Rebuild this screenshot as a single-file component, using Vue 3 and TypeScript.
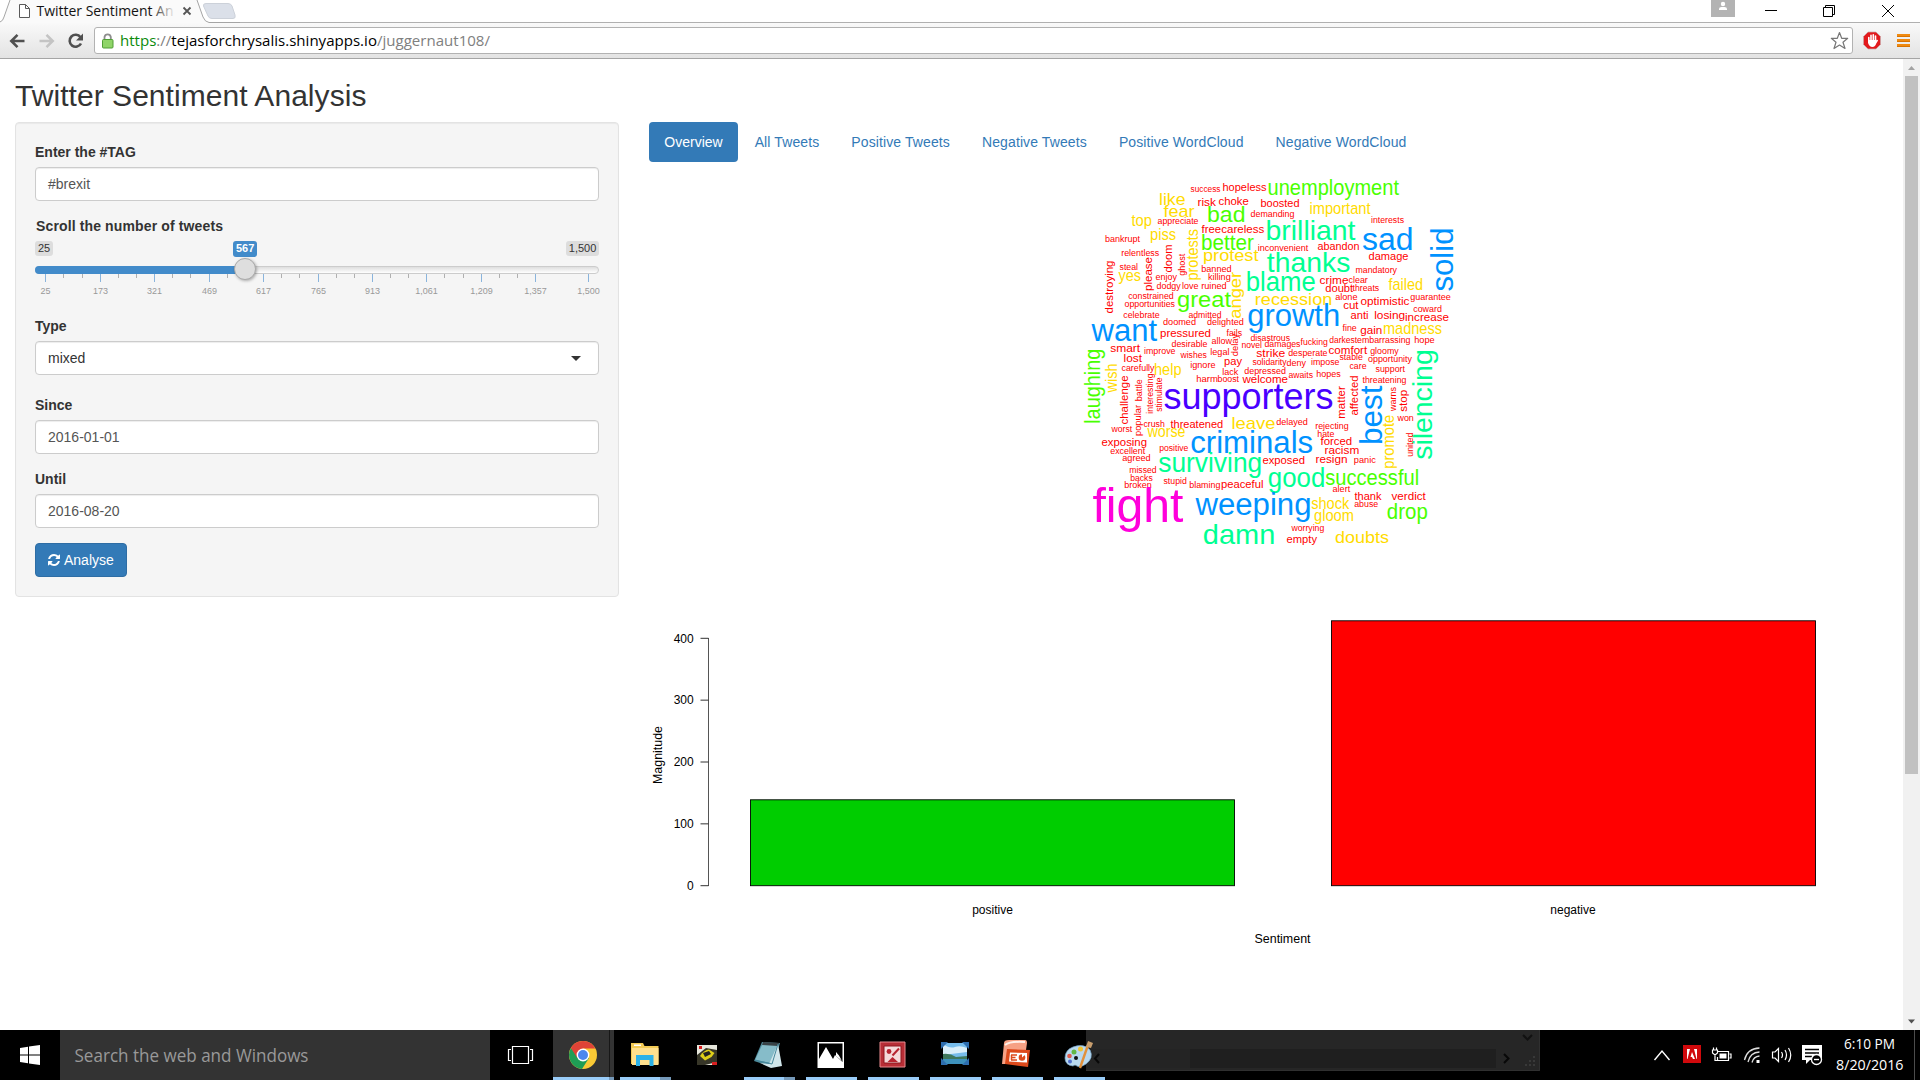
<script setup lang="ts">
type Tier = 'xs' | 'sm' | 'md' | 'lg' | 'xl' | 'xxl' | 'huge' | 'max'
// text, start x, baseline y, run length, tier, vertical
type Word = [string, number, number, number, Tier, boolean?]

const tiers: Record<Tier, { size: number; color: string }> = {
  xs: { size: 8.4, color: '#ff0000' },
  sm: { size: 11, color: '#ff0000' },
  md: { size: 16.6, color: '#ffdb00' },
  lg: { size: 22, color: '#49ff00' },
  xl: { size: 28, color: '#00ff92' },
  xxl: { size: 31, color: '#0092ff' },
  huge: { size: 36, color: '#4900ff' },
  max: { size: 48, color: '#ff00db' },
}

const words: Word[] = [
  ['success', 1190, 191.7, 30, 'xs'], ['hopeless', 1222, 190.7, 44, 'sm'], ['like', 1158.5, 204.7, 26.5, 'md'],
  ['risk', 1197, 205, 18.5, 'sm'], ['choke', 1218, 204, 30.3, 'sm'], ['boosted', 1260, 206.7, 39, 'sm'],
  ['fear', 1163, 216.7, 31, 'md'], ['top', 1131, 225, 20.5, 'md'], ['appreciate', 1157, 223.7, 41, 'xs'],
  ['bad', 1206.5, 221.7, 38.5, 'lg'], ['demanding', 1250, 216.7, 44, 'xs'], ['free', 1201, 232.3, 19.5, 'sm'],
  ['careless', 1220.7, 232.7, 43, 'sm'], ['bankrupt', 1104.5, 241.5, 35, 'xs'], ['piss', 1149.5, 239.7, 26, 'md'],
  ['better', 1200.5, 249, 53, 'lg'], ['inconvenient', 1257.3, 250.7, 50.5, 'xs'], ['relentless', 1120.7, 255.5, 38, 'xs'],
  ['protest', 1202.5, 260.7, 55.5, 'md'], ['protests', 1197, 280, 51.5, 'md', true], ['doom', 1171.7, 272, 28, 'sm', true],
  ['ghost', 1184, 275.3, 22, 'xs', true], ['please', 1151.7, 290.5, 34, 'sm', true], ['destroying', 1112, 313, 53, 'sm', true],
  ['steal', 1119, 269, 18.5, 'xs'], ['yes', 1118, 280.7, 22.5, 'md'], ['enjoy', 1155, 279.7, 21.5, 'xs'],
  ['banned', 1200.7, 271.7, 30.5, 'xs'], ['killing', 1207.5, 279, 22.7, 'xs'], ['dodgy', 1156, 288.7, 24.3, 'xs'],
  ['love', 1181.5, 288.3, 16.5, 'xs'], ['ruined', 1200.7, 288, 25.5, 'xs'], ['constrained', 1127.7, 298, 45.5, 'xs'],
  ['opportunities', 1124, 306.7, 50.5, 'xs'], ['great', 1176.5, 306, 54, 'lg'], ['anger', 1240.7, 318.3, 47, 'md', true],
  ['celebrate', 1122.7, 317.7, 36.5, 'xs'], ['admitted', 1188, 317.7, 33, 'xs'], ['doomed', 1162.5, 324.7, 33, 'xs'],
  ['delighted', 1206.5, 324.7, 36.7, 'xs'], ['want', 1091, 340.7, 65.5, 'xxl'], ['pressured', 1159.5, 336, 51, 'sm'],
  ['fails', 1226, 335, 15.5, 'xs'], ['desirable', 1171, 346, 36, 'xs'], ['allow', 1211, 343.7, 20.5, 'xs'],
  ['delay', 1237.7, 355.7, 22.5, 'xs', true], ['novel', 1241, 347.3, 20.5, 'xs'], ['damages', 1264, 346.7, 36, 'xs'],
  ['disastrous', 1250, 340, 39.5, 'xs'], ['smart', 1109.7, 351, 30, 'sm'], ['improve', 1143.5, 353.7, 31.5, 'xs'],
  ['legal', 1209.7, 354.7, 19.3, 'xs'], ['wishes', 1180, 357.3, 26.3, 'xs'], ['strike', 1255.7, 356.3, 29, 'sm'],
  ['lost', 1123, 361.7, 18.5, 'sm'], ['laughing', 1099.5, 423.3, 75, 'lg', true],
  ['unemployment', 1267, 194.3, 131.5, 'lg'], ['important', 1309, 213, 61, 'md'], ['interests', 1370.5, 222.7, 33, 'xs'],
  ['brilliant', 1265, 239.7, 90, 'xl'], ['sad', 1361.5, 249.7, 51.5, 'xxl'], ['solid', 1452.5, 291, 64, 'xxl', true],
  ['abandon', 1317, 249, 42, 'sm'], ['damage', 1368, 259, 40, 'sm'], ['thanks', 1266.3, 271.3, 83.5, 'xl'],
  ['mandatory', 1355, 272.7, 41.5, 'xs'], ['blame', 1245.2, 290.7, 70, 'xl'], ['crime', 1319, 283, 29, 'sm'],
  ['clear', 1348, 282, 19.3, 'xs'], ['failed', 1388, 289, 34.5, 'md'], ['doubt', 1324.7, 291.7, 28, 'sm'],
  ['threats', 1352, 290.3, 26.7, 'xs'], ['recession', 1254.3, 304, 77.5, 'md'], ['alone', 1334.7, 299.3, 22.3, 'xs'],
  ['optimistic', 1360, 304, 49, 'sm'], ['guarantee', 1409.7, 299.3, 40.5, 'xs'], ['cut', 1342.7, 308.7, 15.3, 'sm'],
  ['growth', 1246.7, 325.3, 93, 'xxl'], ['anti', 1350, 318.7, 18, 'sm'], ['losing', 1373.7, 318, 31, 'sm'],
  ['coward', 1412.7, 311.3, 28.7, 'xs'], ['increase', 1404.5, 320.7, 44, 'sm'], ['fine', 1342, 330.7, 14.3, 'xs'],
  ['gain', 1359.7, 333, 22, 'sm'], ['madness', 1382.5, 333.3, 59, 'md'], ['fucking', 1300, 344.7, 27.3, 'xs'],
  ['darkest', 1328.7, 342, 28, 'xs'], ['embarrassing', 1356.5, 342, 53.5, 'xs'], ['hope', 1413.7, 342, 20.5, 'xs'],
  ['comfort', 1328, 353.3, 38.7, 'sm'], ['gloomy', 1369.7, 353, 28.5, 'xs'], ['desperate', 1287.7, 355.3, 39.3, 'xs'],
  ['stable', 1339, 359.7, 23.3, 'xs'], ['opportunity', 1367.5, 361.3, 44, 'xs'], ['pay', 1223.5, 364.3, 18, 'sm'],
  ['ignore', 1189.7, 367.3, 25.3, 'xs'], ['solidarity', 1252, 364.7, 34, 'xs'], ['deny', 1286, 365.3, 19.5, 'xs'],
  ['impose', 1310.5, 364.7, 28.5, 'xs'], ['care', 1349, 368.7, 17, 'xs'], ['support', 1375, 371.7, 29.5, 'xs'],
  ['carefully', 1121, 370, 33, 'xs'], ['wish', 1116.7, 392, 29, 'md', true], ['help', 1153.5, 374, 27.5, 'md'],
  ['lack', 1221.7, 374.3, 16, 'xs'], ['depressed', 1243.7, 373, 41.7, 'xs'], ['harm', 1195.7, 381.7, 21.7, 'xs'],
  ['boost', 1217, 381.7, 21.5, 'xs'], ['welcome', 1242, 382.7, 45.5, 'sm'], ['awaits', 1288, 377.3, 24.5, 'xs'],
  ['hopes', 1315.7, 376.7, 24.5, 'xs'], ['threatening', 1362, 382.7, 44, 'xs'], ['challenge', 1127.7, 424, 49, 'sm', true],
  ['popular', 1140, 435.5, 31, 'xs', true], ['battle', 1141.7, 400.7, 22, 'xs', true], ['interesting', 1152, 413.3, 40.3, 'xs', true],
  ['stimulate', 1161, 411.3, 34.3, 'xs', true], ['supporters', 1163, 408.3, 170, 'huge'], ['matter', 1344, 418.2, 32.5, 'sm', true],
  ['affected', 1357, 415, 40, 'sm', true], ['best', 1381.3, 444.5, 59.5, 'xxl', true], ['warns', 1395.7, 410.5, 24, 'xs', true],
  ['stop', 1406.7, 411.3, 22, 'sm', true], ['silencing', 1431.3, 459.3, 110.5, 'xl', true],
  ['crush', 1143, 426.3, 21.3, 'xs'], ['threatened', 1170, 427, 52.7, 'sm'], ['leave', 1231, 428, 44, 'md'],
  ['worst', 1111, 431.7, 20.7, 'xs'], ['worse', 1147, 436.7, 38, 'md'], ['delayed', 1275.7, 424.7, 31.7, 'xs'],
  ['rejecting', 1314.7, 428, 33.5, 'xs'], ['won', 1397, 420.7, 16.3, 'xs'], ['hate', 1316.7, 436.7, 17.3, 'xs'],
  ['promote', 1393, 468.3, 54, 'md', true], ['united', 1412, 456.3, 24.3, 'xs', true], ['exposing', 1101, 445, 45.5, 'sm'],
  ['criminals', 1189.7, 452.7, 123, 'xxl'], ['forced', 1320, 444.7, 31.7, 'sm'], ['racism', 1324, 453.7, 34.7, 'sm'],
  ['excellent', 1109.7, 453.7, 35, 'xs'], ['positive', 1158.7, 450.7, 29.2, 'xs'], ['agreed', 1121.7, 460.7, 28.5, 'xs'],
  ['surviving', 1157.7, 471, 104, 'xl'], ['exposed', 1262, 463.7, 42.5, 'sm'], ['resign', 1315, 462.7, 32, 'sm'],
  ['panic', 1353.3, 462.7, 22, 'xs'], ['missed', 1128.7, 472.7, 27.5, 'xs'], ['backs', 1129.7, 480.3, 22.5, 'xs'],
  ['broken', 1123.7, 487.7, 27.5, 'xs'], ['stupid', 1163, 483.7, 23.3, 'xs'], ['blaming', 1188.7, 487.7, 31.2, 'xs'],
  ['peaceful', 1220.5, 487, 42.5, 'sm'], ['good', 1267.3, 486.7, 57.5, 'xl'], ['successful', 1324.7, 484, 94, 'lg'],
  ['alert', 1332, 491.7, 17.7, 'xs'], ['fight', 1092, 521.7, 91, 'max'], ['weeping', 1195, 514.7, 116, 'xxl'],
  ['shock', 1310.7, 508, 38, 'md'], ['gloom', 1313.5, 520, 40, 'md'], ['thank', 1354, 499, 27, 'sm'],
  ['abuse', 1353.7, 506.7, 24, 'xs'], ['verdict', 1391, 499.7, 34.3, 'sm'], ['drop', 1386.3, 518.7, 41, 'lg'],
  ['worrying', 1291, 530, 32.7, 'xs'], ['empty', 1286, 542, 30.5, 'sm'], ['doubts', 1334.5, 542, 54, 'md'],
  ['damn', 1202.3, 543.7, 72.5, 'xl'],
]

const tabs = ['Overview', 'All Tweets', 'Positive Tweets', 'Negative Tweets', 'Positive WordCloud', 'Negative WordCloud']
const gridLabels = ['25', '173', '321', '469', '617', '765', '913', '1,061', '1,209', '1,357', '1,500']
const gridX = [10.5, 65.5, 119.5, 174.5, 228.5, 283.5, 337.5, 391.5, 446.5, 500.5, 553.5]
const minorX: number[] = []
for (let i = 0; i < 9; i++) {
  minorX.push(Math.floor(10 + i * 54.45 + 18.8) + 0.5, Math.floor(10 + i * 54.45 + 37) + 0.5)
}
const yTicks = [400, 300, 200, 100, 0].map((v) => ({ v, y: 885.7 - v * 0.6185 }))
</script>

<template>
  <div class="screen">
    <header class="tabstrip">
      <svg width="240" height="24" viewBox="0 0 240 24">
        <path d="M0 24V22Q3 21 4 17L10 0H197L203 17Q205 22 209 22.500V24Z" fill="#fafafa" />
        <path d="M0 22Q3 21 4 17L10 0M197 0L203 17Q205 22 209 22.500H240" fill="none" stroke="#a5a5a5" />
        <path d="M206 3.500H228Q231 3.500 232 6L235 15Q236 18.500 233 18.500H212Q209 18.500 208 16L203.500 6Q203 3.500 206 3.500Z" fill="#dbe0e9" stroke="#ccd1d9" />
        <path d="M19.500 4.500H25.500L29.500 8.500V17.500H19.500ZM25.500 4.500V8.500H29.500" fill="#fff" stroke="#5a5a5a" />
        <defs>
          <linearGradient id="fade" x1="0" x2="1"><stop offset=".83" stop-color="#111" /><stop offset="1" stop-color="#111" stop-opacity=".1" /></linearGradient>
        </defs>
        <text x="36.500" y="16" font-size="14.500" textLength="137" lengthAdjust="spacingAndGlyphs" fill="url(#fade)">Twitter Sentiment An</text>
        <path d="M183.500 7.500L190.500 14.500M190.500 7.500L183.500 14.500" stroke="#555" stroke-width="1.800" />
      </svg>
      <div class="strip-line"></div>
      <svg class="window-controls" width="209" height="23" viewBox="1711 0 209 23">
        <path d="M1711 0H1735V17H1711Z" fill="#b3b3b3" />
        <circle cx="1723" cy="4" r="2.200" fill="#fff" />
        <path d="M1719 10V9Q1719 7 1721.500 7H1724.500Q1727 7 1727 9V10Z" fill="#fff" />
        <path d="M1765 10.500H1777M1823.500 7.500H1832.500V16.500H1823.500ZM1825.500 7.500V5.500H1834.500V14.500H1832.500M1882 5L1894 17M1894 5L1882 17" fill="none" stroke="#000" />
      </svg>
    </header>

    <div class="toolbar">
      <svg class="nav-icons" width="94" height="36" viewBox="0 23 94 36">
        <path d="M24.500 41H12M17.500 34.800L11.300 41L17.500 47.200" fill="none" stroke="#505050" stroke-width="2.600" />
        <path d="M39.500 41H52M46.500 34.800L52.700 41L46.500 47.200" fill="none" stroke="#c4c4c4" stroke-width="2.600" />
        <path d="M80.500 37.200A6 6 0 1 0 81 43.500" fill="none" stroke="#505050" stroke-width="2.600" />
        <path d="M83 33.500V40.500H76Z" fill="#505050" />
      </svg>
      <div class="omnibox">
        <svg width="410" height="25" viewBox="95 28 410 25">
          <path d="M104.500 41V37A3.200 3.200 0 0 1 110.800 37V41" fill="none" stroke="#8d8d8d" stroke-width="1.800" />
          <rect x="102.500" y="39.500" width="10.500" height="8.500" rx="1" fill="#8fd468" stroke="#4f9e35" />
          <text x="120" y="46" font-size="15" textLength="370" lengthAdjust="spacingAndGlyphs"><tspan fill="#0b8a0b">https</tspan><tspan fill="#808080">://</tspan><tspan fill="#000">tejasforchrysalis.shinyapps.io</tspan><tspan fill="#808080">/juggernaut108/</tspan></text>
        </svg>
        <svg width="24" height="25" viewBox="1828 28 24 25">
          <path d="M1839.500 32.500L1841.700 38.300H1847.700L1843 42.200L1845 48.500L1839.500 45L1834 48.500L1836 42.200L1831.300 38.300H1837.300Z" fill="#fff" stroke="#777" stroke-width="1.200" stroke-linejoin="round" />
        </svg>
      </div>
      <svg width="67" height="36" viewBox="1853 23 67 36">
        <path d="M1868 32H1876L1880.500 36.500V44.500L1876 49H1868L1863.500 44.500V36.500Z" fill="#e2191c" stroke="#c9a9a9" stroke-width=".7" />
        <path d="M1868.800 42V37.500M1871 41V35.300M1873.300 41V34.800M1875.500 41.500V36" stroke="#fff" stroke-width="1.600" stroke-linecap="round" />
        <path d="M1868 40H1876.300V43Q1875.500 47 1872.300 47Q1869.500 47 1868 43Z" fill="#fff" />
        <path d="M1875.500 43L1877.500 40" stroke="#fff" stroke-width="1.500" />
        <path d="M1897 35.500H1910M1897 40.500H1910M1897 45.500H1910" stroke="#f08a10" stroke-width="3" />
        <path d="M1897 36.500H1910M1897 41.500H1910M1897 46.500H1910" stroke="#d06d00" stroke-width=".8" />
      </svg>
    </div>

    <div class="viewport">
      <main class="page">
        <h2>Twitter Sentiment Analysis</h2>
        <div class="row">
          <form class="well">
            <div class="group">
              <label>Enter the #TAG</label>
              <div class="control">#brexit</div>
            </div>
            <div class="group slider-group">
              <label>Scroll the number of tweets</label>
              <div class="slider">
                <div class="slider-labels">
                  <span class="limit">25</span><span class="limit">1,500</span>
                  <span class="current">567</span>
                </div>
                <div class="track"><div class="fill"></div><div class="handle"></div></div>
                <svg class="grid" width="570" height="22" viewBox="0 0 570 22">
                  <path v-for="x in minorX" :key="'m' + x" :d="`M${x} 0V4`" stroke="#b0b0b0" />
                  <path v-for="x in gridX" :key="x" :d="`M${x} 0V8`" stroke="#8ab4dc" />
                  <text v-for="(t, i) in gridLabels" :key="t" :x="gridX[i]" y="19.500" text-anchor="middle">{{ t }}</text>
                </svg>
              </div>
            </div>
            <div class="group type-group">
              <label>Type</label>
              <div class="control select">mixed<i class="caret"></i></div>
            </div>
            <div class="group">
              <label>Since</label>
              <div class="control">2016-01-01</div>
            </div>
            <div class="group">
              <label>Until</label>
              <div class="control">2016-08-20</div>
            </div>
            <button type="button" class="btn">
              <svg width="12" height="14" viewBox="0 0 1536 1536"><path fill="#fff" d="M1511 928q0 5-1 7-64 268-268 434.500T764 1536q-146 0-282.500-55T238 1324l-129 129q-19 19-45 19t-45-19-19-45V960q0-26 19-45t45-19h448q26 0 45 19t19 45-19 45l-137 137q71 66 161 102t187 36q134 0 250-65t186-179q11-17 53-117 8-23 30-23h192q13 0 22.500 9.500t9.500 22.500zm25-800v448q0 26-19 45t-45 19h-448q-26 0-45-19t-19-45 19-45l138-138Q969 256 768 256q-134 0-250 65T332 500q-11 17-53 117-8 23-30 23H50q-13 0-22.500-9.500T18 608v-7q65-268 270-434.500T768 0q146 0 284 55.500T1297 212l130-129q19-19 45-19t45 19 19 45z" /></svg>
              Analyse
            </button>
          </form>

          <section class="results">
            <nav class="pills">
              <a v-for="(t, i) in tabs" :key="t" :class="{ active: i === 0 }">{{ t }}</a>
            </nav>
            <svg class="plot" width="1239" height="400" viewBox="648.500 161.500 1239 400">
              <text
                v-for="w in words"
                :key="w[0]"
                :transform="`translate(${w[1]} ${w[2]})${w[5] ? ' rotate(-90)' : ''}`"
                :font-size="tiers[w[4]].size"
                :fill="tiers[w[4]].color"
                :textLength="w[3]"
                lengthAdjust="spacingAndGlyphs"
              >{{ w[0] }}</text>
            </svg>
            <svg class="plot bars" width="1239" height="400" viewBox="649 562 1239 400">
              <path d="M708.500 638V886" stroke="#555" />
              <template v-for="t in yTicks" :key="t.v">
                <path :d="`M700.500 ${t.y}H708.500`" stroke="#333" />
                <text x="693.700" :y="t.y + 4.300" text-anchor="end">{{ t.v }}</text>
              </template>
              <rect x="750.500" y="799.800" width="484" height="85.900" fill="#00cd00" stroke="#000" stroke-width=".9" />
              <rect x="1331.500" y="620.800" width="484" height="264.900" fill="#ff0000" stroke="#000" stroke-width=".9" />
              <text x="992.500" y="914" text-anchor="middle">positive</text>
              <text x="1573" y="914" text-anchor="middle">negative</text>
              <text x="1282.500" y="943" text-anchor="middle" textLength="56" lengthAdjust="spacingAndGlyphs">Sentiment</text>
              <text transform="translate(661.800 755) rotate(-90)" text-anchor="middle" textLength="58" lengthAdjust="spacingAndGlyphs">Magnitude</text>
            </svg>
          </section>
        </div>
      </main>
      <aside class="scrollbar">
        <svg width="17" height="17"><path d="M5 11L8.500 7L12 11Z" fill="#a3a3a3" /></svg>
        <div class="thumb"></div>
        <svg width="17" height="17"><path d="M5 6.500L8.500 10.500L12 6.500Z" fill="#505050" /></svg>
      </aside>
    </div>

    <footer class="taskbar">
      <div class="start">
        <svg width="20" height="20" viewBox="0 0 20 20"><path fill="#fff" d="M0 3L8 1.800V9.500H0ZM9 1.600L20 0V9.500H9ZM0 10.500H8V18.200L0 17ZM9 10.500H20V20L9 18.400Z" /></svg>
      </div>
      <div class="search">
        <svg width="260" height="50"><text x="14.500" y="32" font-size="18" fill="#999" textLength="234" lengthAdjust="spacingAndGlyphs">Search the web and Windows</text></svg>
      </div>
      <svg class="apps" width="1430" height="50" viewBox="490 1030 1430 50">
        <!-- faint window showing through the bar -->
        <path d="M1086 1030H1540V1071H1086Z" fill="#262626" />
        <path d="M1086 1049H1496V1068H1086Z" fill="#242424" />
        <path d="M1190 1049H1496V1068H1190Z" fill="#1f1f1f" />
        <path d="M1539.500 1030V1070.500H1086" fill="none" stroke="#303030" />
        <path d="M1099 1054L1095 1058.500L1099 1063M1504 1054L1508.500 1058.500L1504 1063" fill="none" stroke="#080808" stroke-width="2" />
        <path d="M1523 1035L1527.500 1039.500L1532 1035" fill="none" stroke="#111" stroke-width="2" />
        <path d="M1533 1056h2v2h-2zM1529 1060h2v2h-2zM1533 1060h2v2h-2zM1525 1064h2v2h-2zM1529 1064h2v2h-2zM1533 1064h2v2h-2z" fill="#393939" />
        <!-- task view -->
        <path d="M512.500 1046.500H528.500V1063.500H512.500ZM511 1049.500H508.500V1060.500H511M530 1049.500H532.500V1060.500H530" fill="none" stroke="#fff" stroke-width="1.200" />
        <!-- chrome -->
        <path d="M553 1030H614V1080H553Z" fill="#333" />
        <path d="M609 1030H610V1080H609Z" fill="#171717" />
        <circle cx="583" cy="1055" r="14" fill="#f9c935" />
        <path d="M583 1055L570.900 1048A14 14 0 0 0 582 1069L589 1058Z" fill="#1f9d55" />
        <path d="M583 1048.500H595.400A14 14 0 0 0 570.900 1048L577.300 1058Z" fill="#de4337" />
        <circle cx="583" cy="1055" r="6.400" fill="#fff" />
        <circle cx="583" cy="1055" r="5" fill="#4b87ee" />
        <!-- file explorer -->
        <path d="M631 1043H643L644.500 1046H658.500V1064H631Z" fill="#f3cb55" />
        <path d="M632 1048H658.500V1065H632Z" fill="#ffe08e" />
        <path d="M634 1044.500H641V1046H634Z" fill="#fff" />
        <path d="M636 1066V1055H653.500V1066H649.500V1060H640V1066Z" fill="#2cb1e8" />
        <!-- racing game -->
        <path d="M697 1045H717V1065H697Z" fill="#e6e6dc" />
        <path d="M697 1055L706 1048L717 1050V1062L705 1065H697Z" fill="#373628" />
        <path d="M700 1056Q704 1050 709 1049.500L714.500 1053L711.500 1057L705 1060.500Z" fill="#dfcf19" />
        <path d="M703 1053L709 1051L711 1054L705 1057Z" fill="#222" />
        <path d="M699 1046H702V1049H699ZM712 1062H717V1065H712Z" fill="#d71e20" />
        <!-- notepad -->
        <path d="M762 1042L780 1043L773 1067L754 1061Z" fill="#4f8b9c" />
        <path d="M763 1043L778 1044L771 1063L755 1060Z" fill="#86bcc9" />
        <path d="M778 1044L782 1066L771 1068L760 1063L769 1064Z" fill="#d1e6eb" />
        <path d="M763 1042L779 1043L778 1046L762 1045Z" fill="#394246" />
        <path d="M778 1044L772 1064L755 1060" fill="none" stroke="#46889c" />
        <!-- photos -->
        <path d="M817.500 1042H844V1068H817.500Z" fill="#fff" />
        <path d="M819 1043.500H842.500V1062L835 1055L833 1059L826 1047L819 1059Z" fill="#000" />
        <path d="M836 1056L842 1061L839 1055.500L836 1052Z" fill="#fff" />
        <!-- picture manager -->
        <path d="M880 1042H905V1067H880Z" fill="#b72e36" stroke="#e98a8f" />
        <path d="M884 1046H901V1063H884Z" fill="#f5dada" stroke="#8e1820" />
        <circle cx="889" cy="1051.500" r="2.400" fill="#b72430" />
        <path d="M887.500 1062L892.500 1057L898 1062Z" fill="#b72430" />
        <path d="M892.500 1055.500L899 1048.500" stroke="#b72430" stroke-width="2" />
        <!-- photo viewer -->
        <path d="M943 1043H967V1064H943Z" fill="#76bceb" />
        <path d="M943 1044Q950 1049 955 1047T967 1048V1052L943 1055Z" fill="#d9eef9" />
        <path d="M943 1054Q950 1053 956 1057L967 1056V1059H943Z" fill="#3e785d" />
        <path d="M943 1059H967V1064H943Z" fill="#3d91bd" />
        <path d="M941 1042H948L941 1049ZM969 1042V1049L962 1042ZM941 1065V1058L948 1065ZM969 1065H962L969 1058Z" fill="#2d6dae" />
        <!-- powerpoint -->
        <path d="M1004 1043Q1004 1040 1009 1040H1025Q1027 1040 1027 1043L1024 1064H1002Z" fill="#f6a184" />
        <path d="M1005 1045Q1010 1041 1025 1042" fill="none" stroke="#fff0e8" stroke-width="2" />
        <path d="M1007 1049L1030 1050L1028 1067L1005 1064Z" fill="#dd4a1c" />
        <path d="M1010 1052.500L1027 1053V1062.500L1009 1061.500Z" fill="#fff" />
        <path d="M1011 1055H1017M1011 1057.500H1015.500M1011 1060H1017M1011.500 1055V1060" stroke="#dd4a1c" stroke-width="1.500" />
        <circle cx="1022" cy="1057.500" r="3.300" fill="#dd4a1c" />
        <path d="M1022 1057.500V1054H1026Z" fill="#fff" />
        <!-- paint -->
        <path d="M1065 1058Q1065 1050 1073 1047Q1084 1043 1090 1050Q1094 1058 1086 1064Q1080 1068 1077 1066Q1075 1064 1073 1066Q1065 1065 1065 1058Z" fill="#b9d9ef" stroke="#7aa8cc" stroke-width=".7" />
        <circle cx="1074" cy="1052" r="2.500" fill="#62b744" /><circle cx="1080.500" cy="1049" r="2.500" fill="#f0c536" /><circle cx="1069.500" cy="1056" r="2.300" fill="#df5d4d" /><circle cx="1076" cy="1058" r="2" fill="#111" /><circle cx="1070" cy="1061.500" r="2" fill="#5070cc" />
        <path d="M1088 1045L1080 1068" stroke="#e2913b" stroke-width="2.400" />
        <path d="M1086 1047L1088 1041L1093 1043L1091 1048Z" fill="#c79d6d" />
        <!-- running indicators -->
        <path d="M553 1077H609V1080H553ZM620 1077H660V1080H620ZM744 1077H784V1080H744ZM806 1077H857V1080H806ZM868 1077H919V1080H868ZM930 1077H981V1080H930ZM992 1077H1043V1080H992ZM1054 1077H1105V1080H1054Z" fill="#99ccf8" />
        <path d="M609 1077H614V1080H609ZM660 1077H671V1080H660ZM784 1077H795V1080H784Z" fill="#7599b9" />
        <!-- tray -->
        <path d="M1654.500 1060L1662 1051L1669.500 1060" fill="none" stroke="#fff" stroke-width="1.400" />
        <path d="M1683 1045H1701V1063H1683Z" fill="#d0090c" />
        <path d="M1687 1059V1049H1690L1687.500 1059ZM1697 1059V1049H1694L1696.500 1059ZM1692 1052L1695 1059H1693L1692 1057H1690.500Z" fill="#fff" />
        <path d="M1717.500 1051.500H1728.500V1060.500H1717.500V1057M1729.500 1054H1731V1058H1729.500M1712.500 1050H1717.500V1053L1715 1055L1712.500 1053ZM1713.500 1050V1047.500M1716.500 1050V1047.500M1715 1055V1060.500H1717" fill="none" stroke="#fff" stroke-width="1.200" />
        <path d="M1719.500 1053.500H1726.500V1058.500H1719.500Z" fill="#fff" />
        <path d="M1744.500 1060Q1747 1048.500 1759.500 1048M1748 1062Q1750 1052.500 1759.500 1052M1752 1062.500Q1753.500 1056.500 1759.500 1056" fill="none" stroke="#ddd" stroke-width="1.300" />
        <path d="M1756.500 1060H1759.500V1063H1756.500Z" fill="#fff" />
        <path d="M1772.500 1052H1775L1778.500 1048.500V1061.500L1775 1058H1772.500ZM1781.500 1052Q1783.500 1055 1781.500 1058M1785 1050Q1788 1055 1785 1060M1788.500 1048Q1793 1055 1788.500 1062" fill="none" stroke="#fff" stroke-width="1.200" />
        <path d="M1802 1045H1822V1060H1810L1806 1064V1060H1802Z" fill="#fff" />
        <path d="M1805 1049.500H1819M1805 1053H1819M1805 1056.500H1812" stroke="#000" stroke-width="1.300" />
        <circle cx="1816.500" cy="1059.500" r="5" fill="#000" stroke="#fff" stroke-width="1.300" />
        <path d="M1814 1059.500H1819" stroke="#fff" stroke-width="1.400" />
        <text x="1844" y="1049" font-size="14.500" fill="#fff" textLength="51" lengthAdjust="spacingAndGlyphs">6:10 PM</text>
        <text x="1836" y="1070" font-size="14.500" fill="#fff" textLength="67.500" lengthAdjust="spacingAndGlyphs">8/20/2016</text>
        <path d="M1914.500 1030V1080" stroke="#4c4c4c" />
      </svg>
    </footer>
  </div>
</template>

<style>
body {
  background: #fff;
  overflow: hidden;
}
</style>

<style scoped>
.screen {
  display: flex;
  flex-direction: column;
  width: 1920px;
  height: 1080px;
  background: #fff;
  color: #333;
  font: 14px/20px "Liberation Sans", Arial, sans-serif;
}
svg {
  display: block;
  flex: none;
}
.tabstrip {
  display: flex;
  height: 23px;
  font-family: "Open Sans", "Noto Sans", sans-serif;
  overflow: hidden;
}
.strip-line {
  flex: 1;
  border-bottom: 1px solid #b0b0b0;
}
.window-controls {
  background: linear-gradient(#b0b0b0, #b0b0b0) bottom / 100% 1px no-repeat;
}
.toolbar {
  display: flex;
  align-items: center;
  box-sizing: border-box;
  height: 36px;
  background: linear-gradient(#f9f9f9, #e3e3e3);
  border-bottom: 1px solid #a5a5a5;
  font-family: "Open Sans", "Noto Sans", sans-serif;
}
.omnibox {
  display: flex;
  justify-content: space-between;
  flex: 1;
  box-sizing: border-box;
  height: 27px;
  background: #fff;
  border: 1px solid #b2b2b2;
  border-radius: 3px;
}
.viewport {
  display: flex;
  height: 971px;
}
.page {
  box-sizing: border-box;
  width: 1903px;
  padding: 20px 15px 0;
}
h2 {
  margin: 0 0 10px;
  font-size: 30px;
  font-weight: 500;
  line-height: 33px;
  letter-spacing: 0.05px;
}
.row {
  display: flex;
  align-items: flex-start;
  gap: 30px;
}
.well {
  box-sizing: border-box;
  width: 604.300px;
  height: 475px;
  padding: 19px;
  background: #f5f5f5;
  border: 1px solid #e3e3e3;
  border-radius: 4px;
  box-shadow: inset 0 1px 1px rgba(0, 0, 0, 0.05);
}
.group {
  margin-bottom: 15px;
}
label {
  display: block;
  margin-bottom: 5px;
  font-weight: 700;
}
.control {
  box-sizing: border-box;
  height: 34px;
  padding: 6px 12px;
  color: #555;
  background: #fff;
  border: 1px solid #ccc;
  border-radius: 4px;
  box-shadow: inset 0 1px 1px rgba(0, 0, 0, 0.075);
}
.select {
  display: flex;
  justify-content: space-between;
  align-items: center;
  color: #333;
  padding-right: 17px;
}
.caret {
  border: 5px solid transparent;
  border-top-color: #333;
  border-bottom: 0;
}
.slider-group {
  height: 85px;
}
.slider-group label {
  padding-left: 1px;
  letter-spacing: 0.13px;
}
.type-group {
  margin-bottom: 20px;
}
.slider-labels {
  position: relative;
  display: flex;
  justify-content: space-between;
  height: 25px;
  font-size: 11px;
  line-height: 15px;
}
.limit {
  height: 15px;
  padding: 0 3px;
  background: #ddd;
  border-radius: 3px;
}
.current {
  position: absolute;
  left: 198px;
  top: 0;
  padding: 0 3px 1px;
  background: #428bca;
  border-radius: 3px;
  color: #fff;
  font-weight: 700;
}
.track {
  position: relative;
  box-sizing: border-box;
  height: 8px;
  background: linear-gradient(#dedede, #fff);
  border: 1px solid #ccc;
  border-radius: 8px;
}
.fill {
  width: 210px;
  height: 8px;
  margin: -1px;
  background: #428bca;
  border-radius: 8px 0 0 8px;
}
.handle {
  position: absolute;
  box-sizing: border-box;
  left: 198px;
  top: -9px;
  width: 22px;
  height: 22px;
  background: #dedede;
  border: 1px solid #aaa;
  border-radius: 50%;
  box-shadow: 1px 1px 3px rgba(0, 0, 0, 0.3);
}
.grid {
  font-size: 9px;
  fill: #999;
  overflow: visible;
}
.btn {
  display: flex;
  align-items: center;
  gap: 4px;
  height: 34px;
  padding: 0 12px;
  color: #fff;
  background: #337ab7;
  border: 1px solid #2e6da4;
  border-radius: 4px;
  font: 14px/20px "Liberation Sans", Arial, sans-serif;
}
.results {
  width: 1239px;
}
.pills {
  display: flex;
  gap: 2px;
}
.pills a {
  padding: 10px 15px;
  color: #337ab7;
  border-radius: 4px;
  letter-spacing: 0.11px;
}
.pills .active {
  color: #fff;
  background: #337ab7;
  letter-spacing: 0;
}
.plot {
  font-family: "Liberation Sans", Arial, sans-serif;
}
.bars {
  font-size: 12px;
}
.scrollbar {
  display: flex;
  flex-direction: column;
  width: 17px;
  background: #f1f1f1;
}
.scrollbar svg:last-child {
  margin-top: auto;
}
.thumb {
  width: 13px;
  height: 698px;
  margin: 0 2px;
  background: #c1c1c1;
}
.taskbar {
  display: flex;
  height: 50px;
  background: #000;
  font-family: "Open Sans", "Noto Sans", sans-serif;
}
.start {
  display: flex;
  align-items: center;
  justify-content: center;
  width: 60px;
}
.search {
  width: 430px;
  background: #333;
}
</style>
